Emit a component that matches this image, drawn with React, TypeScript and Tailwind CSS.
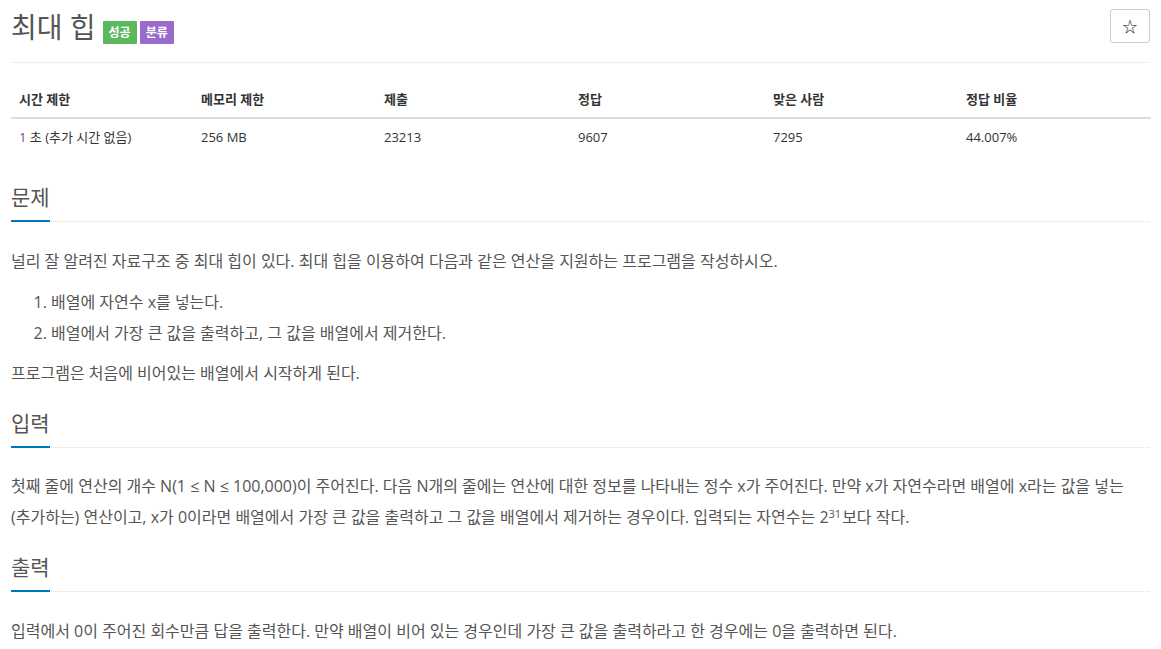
const stats = [
  { label: "시간 제한", value: "time" },
  { label: "메모리 제한", value: "256 MB" },
  { label: "제출", value: "23213" },
  { label: "정답", value: "9607" },
  { label: "맞은 사람", value: "7295" },
  { label: "정답 비율", value: "44.007%" },
];

function Headline({ title }: { title: string }) {
  return (
    <h2 className="flex border-b border-dotted border-[#ddd] text-[21px] leading-[30px] font-normal text-[#555]">
      <span className="-mb-px border-b-2 border-[#0076c0] pb-[8px]">{title}</span>
    </h2>
  );
}

export default function App() {
  return (
    <div className="min-h-screen bg-white px-[11px] pt-[9px] font-['Open_Sans','Noto_Sans_CJK_KR',sans-serif] text-[#555]">
      <div className="flex items-start justify-between">
        <div className="flex items-center">
          <h1 className="text-[28px] leading-[36px] font-normal text-[#555]">최대 힙</h1>
          <div className="ml-[7px] mt-[11px] flex gap-[3px]">
            <span className="flex h-[23px] items-center rounded-[1px] bg-[#5cb85c] px-[6px] text-[12px] font-bold text-white">성공</span>
            <span className="flex h-[23px] items-center rounded-[1px] bg-[#9b6bcc] px-[6px] text-[12px] font-bold text-white">분류</span>
          </div>
        </div>
        <button className="flex h-[34px] w-[40px] items-center justify-center rounded-[3px] border border-[#ccc] bg-white text-[15px] text-[#222]">
          ☆
        </button>
      </div>

      <hr className="mt-[17px] border-0 border-t border-[#eee]" />

      <div className="mt-[18px] grid grid-cols-[182px_183px_194px_195px_193px_193px] text-[13px] leading-[20px] text-[#333]">
        {stats.map((s) => (
          <div key={s.label} className="border-b-2 border-[#ddd] px-2 py-2 font-bold">
            {s.label}
          </div>
        ))}
        {stats.map((s) => (
          <div key={s.label + "v"} className="px-2 py-2">
            {s.value === "time" ? (
              <>
                <span className="text-[#7b3f9a]">1</span> 초 (추가 시간 없음)
              </>
            ) : (
              s.value
            )}
          </div>
        ))}
      </div>

      <section className="mt-[27px]">
        <Headline title="문제" />
        <div className="mt-[24px] text-[16px] leading-[31px]">
          <p className="mb-[10px]">
            널리 잘 알려진 자료구조 중 최대 힙이 있다. 최대 힙을 이용하여 다음과 같은 연산을 지원하는 프로그램을 작성하시오.
          </p>
          <ol className="mb-[9px] list-decimal pl-[40px]">
            <li>배열에 자연수 x를 넣는다.</li>
            <li>배열에서 가장 큰 값을 출력하고, 그 값을 배열에서 제거한다.</li>
          </ol>
          <p className="mb-[10px]">프로그램은 처음에 비어있는 배열에서 시작하게 된다.</p>
        </div>
      </section>

      <section className="mt-[19px]">
        <Headline title="입력" />
        <div className="mt-[23px] text-[16px] leading-[31px]">
          <p className="mb-[10px]">
            첫째 줄에 연산의 개수 N(1 ≤ N ≤ 100,000)이 주어진다. 다음 N개의 줄에는 연산에 대한 정보를 나타내는 정수 x가 주어진다. 만약 x가 자연수라면 배열에 x라는 값을 넣는
            <span className="whitespace-nowrap">(추가하는)</span> 연산이고, x가 0이라면 배열에서 가장 큰 값을 출력하고 그 값을 배열에서 제거하는 경우이다. 입력되는 자연수는 2
            <sup className="mr-px text-[11px] leading-none">31</sup>보다 작다.
          </p>
        </div>
      </section>

      <section className="mt-[19px]">
        <Headline title="출력" />
        <div className="mt-[24px] text-[16px] leading-[31px]">
          <p className="mb-[10px]">
            입력에서 0이 주어진 회수만큼 답을 출력한다. 만약 배열이 비어 있는 경우인데 가장 큰 값을 출력하라고 한 경우에는 0을 출력하면 된다.
          </p>
        </div>
      </section>
    </div>
  );
}
